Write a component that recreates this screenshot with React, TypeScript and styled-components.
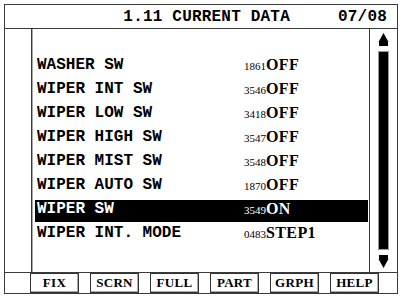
import styled, { createGlobalStyle } from "styled-components";

const GlobalStyle = createGlobalStyle`
  html, body {
    margin: 0;
    padding: 0;
    background: #fff;
  }
  body {
    font-family: "Liberation Mono", monospace;
    color: #000;
  }
`

interface DataRow {
    label: string,
    code: string,
    value: string,
}

const rows: DataRow[] = [
    { label: 'WASHER SW', code: '1861', value: 'OFF' },
    { label: 'WIPER INT SW', code: '3546', value: 'OFF' },
    { label: 'WIPER LOW SW', code: '3418', value: 'OFF' },
    { label: 'WIPER HIGH SW', code: '3547', value: 'OFF' },
    { label: 'WIPER MIST SW', code: '3548', value: 'OFF' },
    { label: 'WIPER AUTO SW', code: '1870', value: 'OFF' },
    { label: 'WIPER SW', code: '3549', value: 'ON' },
    { label: 'WIPER INT. MODE', code: '0483', value: 'STEP1' },
];

const keys = ['FIX', 'SCRN', 'FULL', 'PART', 'GRPH', 'HELP'];

const Screen = styled.div`
  margin: 4px 0 0 4px;
  width: 392px;
  height: 288px;
  border: 1px solid #3a3a3a;
  box-shadow: 0 2px 0 #d4d4d4;
  display: flex;
  flex-direction: column;
  background: #fff;
`

const Header = styled.div`
  height: 23px;
  border-bottom: 1px solid #3a3a3a;
  display: flex;
  justify-content: flex-end;
  align-items: center;
  gap: 48px;
  padding-right: 10px;
  font-weight: bold;
  font-size: 16px;
  letter-spacing: 0.2px;
`

const Body = styled.div`
  height: 243px;
  border-bottom: 1px solid #3a3a3a;
  display: flex;
`

const Gutter = styled.div`
  width: 26px;
  border-right: 1px solid #3a3a3a;
  box-shadow: 1px 0 0 #a8a8a8;
`

const List = styled.div`
  flex: 1;
  padding: 27px 1px 0 3px;
  display: flex;
  flex-direction: column;
  gap: 2px;
`

const Row = styled.div<{ $active?: boolean }>`
  height: 22px;
  padding: 0 0 5px 2px;
  box-sizing: border-box;
  display: flex;
  align-items: center;
  background: ${p => p.$active ? '#000' : 'transparent'};
  color: ${p => p.$active ? '#fff' : '#000'};
`

const Label = styled.span`
  width: 207px;
  font-family: "Liberation Mono", monospace;
  font-weight: bold;
  font-size: 16px;
  white-space: pre;
`

const Reading = styled.span`
  display: flex;
  align-items: baseline;
`

const Code = styled.span`
  font-family: "Liberation Serif", serif;
  font-size: 11px;
`

const Value = styled.span`
  font-family: "Liberation Serif", serif;
  font-weight: bold;
  font-size: 16px;
  letter-spacing: 0.4px;
`

const ScrollCol = styled.div`
  width: 27px;
  border-left: 1px solid #3a3a3a;
  display: flex;
  flex-direction: column;
  align-items: center;
  padding: 4px 0 4px;
  gap: 5px;
`

const Thumb = styled.div`
  flex: 1;
  width: 9px;
  background: #000;
  border: 1px solid #9a9a9a;
`

const Footer = styled.div`
  flex: 1;
  display: flex;
  align-items: stretch;
  gap: 11px;
  padding: 0 0 0 25px;
`

const Key = styled.div`
  width: 47px;
  border: 1px solid #333;
  box-shadow: inset -1px -1px 0 #aaa;
  display: flex;
  justify-content: center;
  align-items: center;
  font-family: "Liberation Serif", serif;
  font-weight: bold;
  font-size: 13px;
  letter-spacing: 0.3px;
`

function Arrow({ down }: { down?: boolean }) {
    return (
        <svg width="11" height="13" viewBox="0 0 11 13" style={{ transform: down ? 'rotate(180deg)' : undefined }}>
            <path d="M5.5 0 L10.5 9 H0.5 Z" fill="#000" />
            <rect x="1" y="9" width="9" height="4" fill="#000" />
        </svg>
    );
}

export default function App() {
    return (
        <>
            <GlobalStyle />
            <Screen>
                <Header>
                    <span>1.11 CURRENT DATA</span>
                    <span>07/08</span>
                </Header>
                <Body>
                    <Gutter />
                    <List>
                        {rows.map((r, i) => (
                            <Row key={r.label} $active={i === 6}>
                                <Label>{r.label}</Label>
                                <Reading>
                                    <Code>{r.code}</Code>
                                    <Value>{r.value}</Value>
                                </Reading>
                            </Row>
                        ))}
                    </List>
                    <ScrollCol>
                        <Arrow />
                        <Thumb />
                        <Arrow down />
                    </ScrollCol>
                </Body>
                <Footer>
                    {keys.map(k => <Key key={k}>{k}</Key>)}
                </Footer>
            </Screen>
        </>
    );
}
